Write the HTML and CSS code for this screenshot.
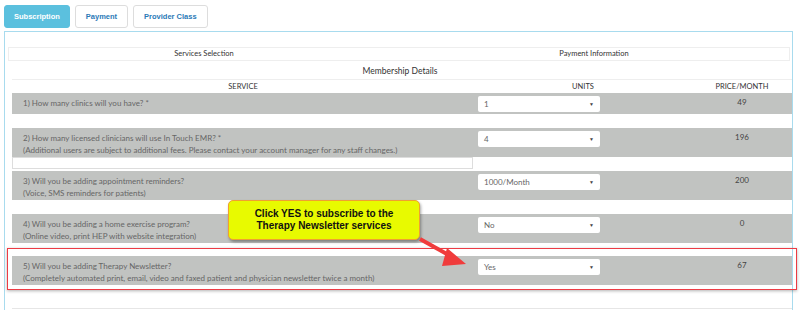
FILE: index.html
```html
<!DOCTYPE html>
<html>

<head>
  <meta charset="UTF-8">
  <title>Subscription</title>
  <link rel="stylesheet" href="styles.css">
</head>

<body>
  <div class="tabs">
    <button class="tab active">Subscription</button>
    <button class="tab">Payment</button>
    <button class="tab">Provider Class</button>
  </div>

  <div class="panel">
    <div class="steps">
      <div class="step">Services Selection</div>
      <div class="step">Payment Information</div>
    </div>

    <div class="caption">Membership Details</div>

    <div class="grid">
      <div class="head">
        <span>SERVICE</span>
        <span>UNITS</span>
        <span>PRICE/MONTH</span>
      </div>

      <div class="row short">
        <div class="service">1) How many clinics will you have? *</div>
        <div class="units"><div class="select">1<span class="caret">&#9660;</span></div></div>
        <div class="price">49</div>
      </div>

      <div class="row gap">
        <div class="service">2) How many licensed clinicians will use In Touch EMR? *<br>(Additional users are subject to additional fees. Please contact your account manager for any staff changes.)</div>
        <div class="units"><div class="select">4<span class="caret">&#9660;</span></div></div>
        <div class="price">196</div>
      </div>
      <div class="field"></div>

      <div class="row">
        <div class="service">3) Will you be adding appointment reminders?<br>(Voice, SMS reminders for patients)</div>
        <div class="units"><div class="select">1000/Month<span class="caret">&#9660;</span></div></div>
        <div class="price">200</div>
      </div>

      <div class="row gap">
        <div class="service">4) Will you be adding a home exercise program?<br>(Online video, print HEP with website integration)</div>
        <div class="units"><div class="select">No<span class="caret">&#9660;</span></div></div>
        <div class="price">0</div>
      </div>

      <div class="mark">
        <div class="row">
          <div class="service">5) Will you be adding Therapy Newsletter?<br>(Completely automated print, email, video and faxed patient and physician newsletter twice a month)</div>
          <div class="units"><div class="select">Yes<span class="caret">&#9660;</span></div></div>
          <div class="price">67</div>
        </div>
      </div>
    </div>
    <hr class="foot">
  </div>

  <div class="callout">Click YES to subscribe to the<br>Therapy Newsletter services</div>
  <svg class="arrow" width="60" height="40" viewBox="0 0 60 40">
    <line x1="2" y1="3" x2="36" y2="22" stroke="#f03c3c" stroke-width="4" />
    <polygon points="29,12 48,28 24,30" fill="#f03c3c" />
  </svg>
</body>

</html>
```

FILE: styles.css
```css
body,
html {
  padding: 0;
  margin: 0;
}

body {
  font-family: Lato, "Open Sans", sans-serif;
  background: #FFF;
  color: #666;
  width: 800px;
  overflow: hidden;
}

.tabs {
  display: flex;
  gap: 5px;
  padding: 5px 4px 0 4px;
}

.tab {
  height: 23px;
  padding: 0 10px;
  font-family: Arial, "Liberation Sans", sans-serif;
  font-size: 7.5px;
  font-weight: bold;
  color: #2a7ab7;
  background: #FFF;
  border: 1px solid #ddd;
  border-radius: 3px;
}

.tab.active {
  background: #5bc0de;
  border-color: #5bc0de;
  color: #FFF;
  padding: 0 9px;
}

.panel {
  margin: 3px 7px 0 4px;
  border: 1px solid #a8dbee;
  border-bottom: none;
  padding: 15px 0 0 3px;
  height: 279px;
  box-sizing: border-box;
}

.steps {
  display: flex;
  border: 1px solid #eee;
  height: 12px;
  margin-right: 2px;
  font-size: 7.5px;
  color: #333;
}

.step {
  flex: 1;
  text-align: center;
  line-height: 12px;
}

.caption {
  text-align: center;
  font-size: 8.5px;
  color: #333;
  margin: 3px 0 0 0;
  height: 15px;
  line-height: 14px;
}

.grid {
  margin-left: 4px;
  width: 780px;
}

.head {
  display: grid;
  grid-template-columns: 462px 218px 100px;
  border-top: 1px solid #eee;
  height: 13px;
  font-size: 7.5px;
  color: #333;
  line-height: 14px;
  text-align: center;
}

.row {
  display: grid;
  grid-template-columns: 462px 218px 100px;
  background: #c1c3c1;
  font-size: 8px;
  height: 29px;
}

.row.short {
  height: 21px;
  margin-bottom: 13px;
}

.row.gap {
  margin-bottom: 0;
}

.service {
  padding: 4px 0 0 11px;
  line-height: 12px;
}

.units {
  padding: 3px 0 0 4px;
}

.select {
  width: 116px;
  height: 16px;
  background: #FFF;
  border-radius: 2px;
  line-height: 16px;
  padding-left: 6px;
  position: relative;
}

.caret {
  position: absolute;
  right: 6px;
  top: 0;
  font-size: 5px;
  color: #444;
}

.price {
  text-align: center;
  padding: 4px 0 0 0;
  line-height: 10px;
  color: #444;
}

.field {
  width: 459px;
  height: 10px;
  border: 1px solid #ddd;
  background: #FFF;
  margin: 0 0 2px 0;
}

.row + .row.gap {
  margin-top: 14px;
}

.mark {
  margin: 5px -5px 0 -5px;
  padding: 7px 4px 4px 4px;
  border: 1.5px solid #ec3b44;
  box-shadow: 0 1px 3px rgba(0, 0, 0, 0.3);
}

.foot {
  margin: 18px 0 0 4px;
  width: 780px;
  border: none;
  border-top: 1px solid #e6e6e6;
}

.callout {
  position: absolute;
  left: 228px;
  top: 200px;
  width: 192px;
  height: 40px;
  box-sizing: border-box;
  background: #e8fa00;
  border: 1.5px solid #f0a030;
  border-radius: 5px;
  box-shadow: 1px 2px 3px rgba(0, 0, 0, 0.35);
  font-family: Arial, "Liberation Sans", sans-serif;
  font-weight: bold;
  font-size: 10px;
  line-height: 12px;
  color: #111;
  text-align: center;
  padding-top: 7px;
}

.arrow {
  position: absolute;
  left: 418px;
  top: 236px;
}
```
